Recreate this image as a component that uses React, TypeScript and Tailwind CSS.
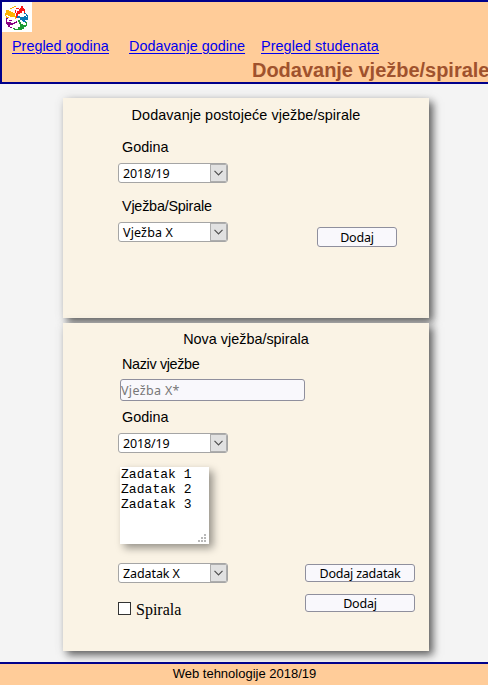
import type { ReactNode } from 'react';

const ARIAL = "font-['Liberation_Sans',Arial,sans-serif]";
const UI = "font-['Noto_Sans',sans-serif]";

function Logo() {
  return (
    <svg width="30" height="30" viewBox="0 0 30 30" className="block bg-white" shapeRendering="crispEdges">
      <path d="M4 8H7V9H9V10H11V11H13V14H12V15H8V14H6V13H4V14H3V11H4Z" fill="#ffb400" />
      <path d="M8 6H10V5H12V4H14V5H12V6H10V7H8ZM4 14H5V15H7V16H4ZM12 14H14V17H13V15H12Z" fill="#ffb400" />
      <path d="M19 4H21V6H22V9H20V11H18V12H16V14H15V16H14V11H15V9H17V7H18V6H19Z" fill="#fa1414" />
      <path d="M14 6H17V7H14ZM22 7H23V11H22ZM13 8H14V11H13Z" fill="#fa1414" />
      <path d="M15 14H18V15H22V14H24V15H25V18H23V19H20V18H18V16H15Z" fill="#0878b4" />
      <path d="M22 11H24V12H25V13H26V18H25V14H24V12H22ZM21 19H24V20H21Z" fill="#0878b4" />
      <path d="M16 18H18V20H19V22H21V23H24V25H22V27H20V28H17V27H16V25H18V22H17V20H16Z" fill="#1e9b32" />
      <path d="M12 27H17V28H12ZM23 20H25V24H24V21H23ZM11 26H13V27H11Z" fill="#1e9b32" />
      <path d="M4 20H9V21H12V20H14V19H15V21H13V22H11V23H8V24H6V23H5V22H4Z" fill="#870082" />
      <path d="M4 16H6V17H5V21H4ZM6 24H8V25H10V26H8V25H6ZM7 18H10V19H7Z" fill="#870082" />
    </svg>
  );
}

function Select({ value, className = '', tracking = '' }: { value: string; className?: string; tracking?: string }) {
  return (
    <div className={`flex h-5 w-[110px] overflow-hidden rounded-[3px] border border-[#a5a5a5] bg-white ${className}`}>
      <span className={`flex-1 pl-1 text-[12.5px] leading-[19px] ${tracking} ${UI}`}>{value}</span>
      <span className="flex w-[17px] items-center justify-center border border-[#adadad] bg-[#e1e1e1]">
        <svg width="9" height="6" viewBox="0 0 9 6" fill="none" stroke="#505050" strokeWidth="1.2">
          <path d="M0.5 0.8L4.5 4.8L8.5 0.8" />
        </svg>
      </span>
    </div>
  );
}

function Button({ children, className }: { children: ReactNode; className: string }) {
  return (
    <button className={`block rounded-[3px] border border-[#8f8f9d] bg-[#f9f8fc] text-center text-[12.5px] tracking-[-0.2px] ${UI} ${className}`}>
      {children}
    </button>
  );
}

function Card({ title, className, titleClass = '', children }: { title: string; className: string; titleClass?: string; children: ReactNode }) {
  return (
    <section className={`ml-[63px] w-[366px] bg-[#faf3e5] shadow-[4px_4px_8px_rgba(0,0,0,0.6),0_0_12px_rgba(0,0,0,0.06)] ${className}`}>
      <h2 className={`text-center text-[14.4px] leading-4 ${titleClass} ${ARIAL}`}>{title}</h2>
      <div className="pl-[55px]">{children}</div>
    </section>
  );
}

const label = `block pl-1 text-[14.4px] leading-4 ${ARIAL}`;

export default function App() {
  return (
    <div className="flex h-[685px] w-[488px] flex-col overflow-hidden bg-[#f4f4f4] text-black">
      <header className={`h-[84px] shrink-0 overflow-hidden border-y-2 border-l-2 border-[#00008b] bg-[#ffcc99] ${ARIAL}`}>
        <Logo />
        <nav className="mt-[5px] flex h-[18px] pl-[10px] text-[14.4px] leading-[18px] whitespace-nowrap text-[#0000ee] underline underline-offset-2">
          <a className="w-[117px]">Pregled godina</a>
          <a className="w-[132px]">Dodavanje godine</a>
          <a className="tracking-[0.06px]">Pregled studenata</a>
        </nav>
        <h1 className="mt-[3px] ml-[250px] text-[20px] leading-6 font-bold tracking-[-0.02px] whitespace-nowrap text-[#a0522d]">Dodavanje vježbe/spirale</h1>
      </header>

      <main className="flex-1">
        <Card title="Dodavanje postojeće vježbe/spirale" titleClass="tracking-[0.07px]" className="mt-[14px] h-[220px] pt-[9px]">
          <span className={`mt-4 ${label}`}>Godina</span>
          <Select value="2018/19" tracking="tracking-[-0.15px]" className="mt-2" />
          <span className={`mt-[15px] tracking-[-0.22px] ${label}`}>Vježba/Spirale</span>
          <div className="mt-2 flex">
            <Select value="Vježba X" tracking="tracking-[0.15px]" />
            <Button className="mt-[5px] ml-[89px] h-5 w-20 leading-5">Dodaj</Button>
          </div>
        </Card>

        <Card title="Nova vježba/spirala" className="mt-[5px] h-[328px] pt-2">
          <span className={`mt-[9px] tracking-[-0.35px] ${label}`}>Naziv vježbe</span>
          <input
            placeholder="Vježba X*"
            className={`mt-[7px] ml-0.5 block h-[22px] w-[185px] rounded-[3px] border border-[#8f8f9d] bg-[#f9f8fc] text-[12.5px] tracking-[0.35px] placeholder:text-[#777] ${UI}`}
          />
          <span className={`mt-2 ${label}`}>Godina</span>
          <Select value="2018/19" tracking="tracking-[-0.15px]" className="mt-2" />
          <div className="mt-[14px] ml-0.5 flex h-[77px] w-[89px] flex-col justify-between bg-white shadow-[4px_4px_8px_rgba(0,0,0,0.4)]">
            <pre className="pl-px font-['Liberation_Mono','Courier_New',monospace] text-[13px] leading-[15px] tracking-[0.05px]">{'Zadatak 1\nZadatak 2\nZadatak 3'}</pre>
            <svg width="8" height="8" viewBox="0 0 8 8" className="mr-[3px] mb-0.5 self-end" fill="#b8b8b8" shapeRendering="crispEdges">
              <path d="M6 0h2v2H6zM3 3h2v2H3zM6 3h2v2H6zM0 6h2v2H0zM3 6h2v2H3zM6 6h2v2H6z" />
            </svg>
          </div>
          <div className="mt-[19px] flex">
            <Select value="Zadatak X" tracking="tracking-[-0.1px]" />
            <Button className="mt-px ml-[77px] h-[18px] w-[110px] leading-[17px]">Dodaj zadatak</Button>
          </div>
          <div className="mt-[11px] flex">
            <label className="flex w-[187px] pt-2 font-['Liberation_Serif','Times_New_Roman',serif] text-[16px] leading-4">
              <span className="mr-[5px] h-[13px] w-[13px] border border-[#333] bg-white" />
              Spirala
            </label>
            <Button className="h-[18px] w-[110px] leading-[17px]">Dodaj</Button>
          </div>
        </Card>
      </main>

      <footer className={`h-[23px] shrink-0 border-t-2 border-[#00008b] bg-[#ffcc99] pl-px text-center text-[13px] leading-5 ${ARIAL}`}>
        Web tehnologije 2018/19
      </footer>
    </div>
  );
}
